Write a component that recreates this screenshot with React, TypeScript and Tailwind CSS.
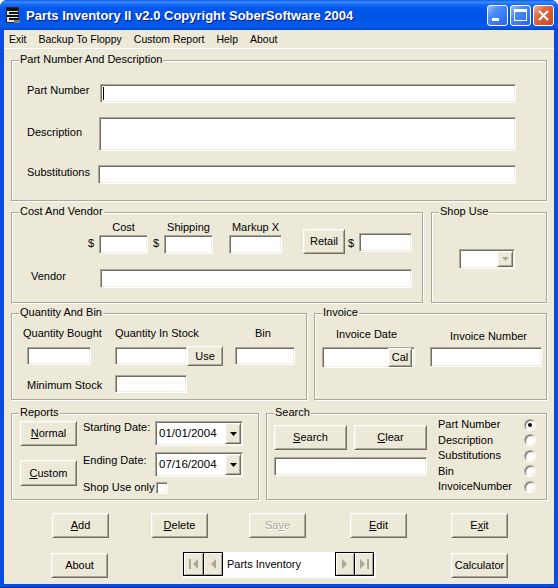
import type { ReactNode } from "react";

function GroupBox({ title, className = "", children }: { title: string; className?: string; children?: ReactNode }) {
  return (
    <div className={`relative shrink-0 border border-[#aca899] shadow-[inset_1px_1px_0_#fff,1px_1px_0_#fff] ${className}`}>
      <span className="absolute left-[7px] top-[-8px] bg-[#ece9d8] px-[1px] leading-[13px] whitespace-nowrap">{title}</span>
      {children}
    </div>
  );
}

function Sunken({ className = "", children }: { className?: string; children?: ReactNode }) {
  return (
    <div className={`shrink-0 bg-white border border-t-[#aca899] border-l-[#aca899] border-r-white border-b-white shadow-[inset_1px_1px_0_#716f64,inset_-1px_-1px_0_#f1efe2] ${className}`}>
      {children}
    </div>
  );
}

function Btn({ children, className = "", disabled = false }: { children?: ReactNode; className?: string; disabled?: boolean }) {
  return (
    <div
      className={`shrink-0 flex items-center justify-center bg-[#ece9d8] border border-t-white border-l-white border-r-[#716f64] border-b-[#716f64] shadow-[inset_1px_1px_0_#f1efe2,inset_-1px_-1px_0_#aca899] whitespace-nowrap ${
        disabled ? "text-[#aca899] [text-shadow:1px_1px_0_#fff]" : "text-black"
      } ${className}`}
    >
      {children}
    </div>
  );
}

function Radio({ checked = false }: { checked?: boolean }) {
  return (
    <div className="w-[12px] h-[12px] shrink-0 rounded-full bg-white border border-t-[#aca899] border-l-[#aca899] border-r-white border-b-white shadow-[inset_1px_1px_0_#716f64,inset_-1px_-1px_0_#f1efe2] flex items-center justify-center">
      {checked && <div className="w-[4px] h-[4px] rounded-full bg-black" />}
    </div>
  );
}

function DatePicker({ value }: { value: string }) {
  return (
    <Sunken className="w-[88px] h-[25px] flex items-center justify-between pl-[3px] pr-[1px]">
      <span className="text-[11.5px]">{value}</span>
      <Btn className="w-[16px] h-[21px]">
        <svg width="7" height="4" viewBox="0 0 7 4">
          <path d="M0 0h7L3.5 4z" fill="#000" />
        </svg>
      </Btn>
    </Sunken>
  );
}

function AppIcon() {
  return (
    <svg width="16" height="18" viewBox="0 0 16 18" className="shrink-0">
      <rect x="1.5" y="1.5" width="12" height="15" fill="#e4e4e4" stroke="#2a2a2a" />
      <rect x="2" y="2" width="11" height="3" fill="#111" />
      <rect x="4" y="6" width="9" height="2" fill="#111" />
      <rect x="2" y="9" width="11" height="2" fill="#111" />
      <rect x="4" y="12" width="9" height="2" fill="#111" />
      <rect x="9" y="14" width="6" height="3" fill="#7a7a7a" />
    </svg>
  );
}

function TitleBar() {
  return (
    <div className="h-[30px] shrink-0 flex items-center pl-[5px] pr-[4px] rounded-t-[7px] bg-[linear-gradient(180deg,#0a5af0_0%,#3d8bff_7%,#1a6ef9_14%,#0058ee_28%,#0054e3_55%,#0058ee_80%,#0a5ae8_90%,#0044c8_100%)]">
      <AppIcon />
      <span className="ml-[5px] text-[13px] font-bold text-white leading-none [text-shadow:1px_1px_0_#0a1a80]">
        Parts Inventory II v2.0 Copyright SoberSoftware 2004
      </span>
      <div className="ml-auto flex gap-[2px] self-start mt-[5px]">
        <div className="relative w-[21px] h-[21px] rounded-[3px] border border-white bg-[linear-gradient(135deg,#9cc0fb_0%,#4a8af7_35%,#2a66ea_100%)]">
          <div className="absolute left-[4px] top-[12px] w-[7px] h-[3px] bg-white" />
        </div>
        <div className="relative w-[21px] h-[21px] rounded-[3px] border border-white bg-[linear-gradient(135deg,#9cc0fb_0%,#4a8af7_35%,#2a66ea_100%)]">
          <div className="absolute left-[3px] top-[3px] w-[13px] h-[12px] border border-white border-t-[3px]" />
        </div>
        <div className="relative w-[21px] h-[21px] rounded-[3px] border border-white bg-[linear-gradient(135deg,#f3b29a_0%,#e2683f_35%,#c8461f_100%)] flex items-center justify-center">
          <svg width="11" height="11" viewBox="0 0 11 11">
            <path d="M1 1L10 10M10 1L1 10" stroke="#fff" strokeWidth="2" />
          </svg>
        </div>
      </div>
    </div>
  );
}

function NavIcon({ dir, end }: { dir: "left" | "right"; end?: boolean }) {
  return (
    <svg width="10" height="10" viewBox="0 0 10 10">
      {dir === "left" ? (
        <>
          {end && <rect x="0" y="0" width="2" height="10" fill="#aca899" />}
          <path d={end ? "M9 0v10L4 5z" : "M8 0v10L3 5z"} fill="#aca899" />
        </>
      ) : (
        <>
          <path d={end ? "M1 0v10l5-5z" : "M2 0v10l5-5z"} fill="#aca899" />
          {end && <rect x="8" y="0" width="2" height="10" fill="#aca899" />}
        </>
      )}
    </svg>
  );
}

function NavBtn({ children, className = "" }: { children: ReactNode; className?: string }) {
  return (
    <div className={`h-full flex items-center justify-center bg-[#ece9d8] shadow-[inset_1px_1px_0_#fff,inset_-1px_-1px_0_#aca899] ${className}`}>
      {children}
    </div>
  );
}

function DataControl() {
  return (
    <div className="ml-[75px] w-[193px] h-[26px] bg-white flex items-start">
      <div className="flex h-[24px] border border-black">
        <NavBtn className="w-[19px]">
          <NavIcon dir="left" end />
        </NavBtn>
        <div className="w-px bg-black" />
        <NavBtn className="w-[18px]">
          <NavIcon dir="left" />
        </NavBtn>
      </div>
      <span className="ml-[4px] mt-[6px] whitespace-nowrap">Parts Inventory</span>
      <div className="ml-auto mr-[2px] flex h-[24px] border border-black">
        <NavBtn className="w-[18px]">
          <NavIcon dir="right" />
        </NavBtn>
        <div className="w-px bg-black" />
        <NavBtn className="w-[18px]">
          <NavIcon dir="right" end />
        </NavBtn>
      </div>
    </div>
  );
}

const searchFields = ["Part Number", "Description", "Substitutions", "Bin", "InvoiceNumber"];

export default function App() {
  return (
    <div className="w-[558px] h-[588px] flex flex-col bg-[#0b4de2] rounded-t-[7px] shadow-[inset_0_-1px_0_#0a2a9c] font-['Liberation_Sans',Arial,sans-serif] text-[11px] leading-[13px] text-black select-none">
      <TitleBar />
      <div className="flex-1 mx-[4px] mb-[4px] bg-[#ece9d8] flex flex-col">
        {/* menu */}
        <div className="h-[19px] shrink-0 flex items-center gap-[12px] pl-[5px] border-b border-white text-[10.5px]">
          <span>Exit</span>
          <span>Backup To Floppy</span>
          <span>Custom Report</span>
          <span>Help</span>
          <span>About</span>
        </div>

        <div className="flex flex-col pl-[7px]">
          {/* part number and description */}
          <GroupBox title="Part Number And Description" className="mt-[11px] w-[536px] h-[141px]">
            <div className="flex items-start mt-[23px] ml-[15px]">
              <span className="w-[73px]">Part Number</span>
              <Sunken className="w-[416px] h-[19px] pl-[2px] pt-[2px]">
                <div className="w-px h-[13px] bg-black" />
              </Sunken>
            </div>
            <div className="flex items-start mt-[14px] ml-[15px]">
              <span className="w-[72px] mt-[9px]">Description</span>
              <Sunken className="w-[417px] h-[34px]" />
            </div>
            <div className="flex items-start mt-[14px] ml-[15px]">
              <span className="w-[71px] mt-[1px]">Substitutions</span>
              <Sunken className="w-[418px] h-[19px]" />
            </div>
          </GroupBox>

          {/* cost / shop use */}
          <div className="flex mt-[11px]">
            <GroupBox title="Cost And Vendor" className="w-[412px] h-[91px]">
              <div className="flex items-start mt-[8px] ml-[76px]">
                <span className="w-[11px] mt-[16px]">$</span>
                <div className="w-[49px] flex flex-col items-center">
                  <span>Cost</span>
                  <Sunken className="w-[49px] h-[19px] mt-[1px]" />
                </div>
                <span className="w-[11px] ml-[5px] mt-[16px]">$</span>
                <div className="w-[49px] flex flex-col items-center">
                  <span>Shipping</span>
                  <Sunken className="w-[49px] h-[19px] mt-[1px]" />
                </div>
                <div className="w-[53px] ml-[16px] flex flex-col items-center">
                  <span className="whitespace-nowrap">Markup X</span>
                  <Sunken className="w-[53px] h-[19px] mt-[1px]" />
                </div>
                <Btn className="w-[42px] h-[25px] ml-[21px] mt-[8px]">Retail</Btn>
                <span className="w-[11px] ml-[3px] mt-[16px]">$</span>
                <Sunken className="w-[53px] h-[19px] mt-[12px]" />
              </div>
              <div className="flex items-start mt-[15px] ml-[19px]">
                <span className="w-[69px] mt-[1px]">Vendor</span>
                <Sunken className="w-[312px] h-[19px]" />
              </div>
            </GroupBox>
            <GroupBox title="Shop Use" className="ml-[8px] w-[116px] h-[91px]">
              <Sunken className="ml-[27px] mt-[36px] w-[56px] h-[20px] p-[1px] flex justify-end">
                <Btn className="w-[16px] h-[16px]">
                  <svg width="7" height="4" viewBox="0 0 7 4">
                    <path d="M0 0h7L3.5 4z" fill="#aca899" />
                  </svg>
                </Btn>
              </Sunken>
            </GroupBox>
          </div>

          {/* quantity / invoice */}
          <div className="flex mt-[10px]">
            <GroupBox title="Quantity And Bin" className="w-[296px] h-[87px]">
              <div className="flex mt-[13px] ml-[11px] whitespace-nowrap">
                <span className="w-[92px]">Quantity Bought</span>
                <span className="w-[140px]">Quantity In Stock</span>
                <span>Bin</span>
              </div>
              <div className="flex items-start mt-[6px] ml-[15px]">
                <Sunken className="w-[64px] h-[18px] mt-[1px]" />
                <Sunken className="w-[72px] h-[18px] mt-[1px] ml-[24px]" />
                <Btn className="w-[36px] h-[20px]">Use</Btn>
                <Sunken className="w-[60px] h-[18px] mt-[1px] ml-[12px]" />
              </div>
              <div className="flex items-start mt-[9px] ml-[15px]">
                <span className="w-[88px] mt-[4px] whitespace-nowrap">Minimum Stock</span>
                <Sunken className="w-[72px] h-[18px]" />
              </div>
            </GroupBox>
            <GroupBox title="Invoice" className="ml-[7px] w-[233px] h-[87px]">
              <div className="flex items-start mt-[14px] ml-[21px] whitespace-nowrap">
                <span className="w-[114px]">Invoice Date</span>
                <span className="mt-[2px]">Invoice Number</span>
              </div>
              <div className="flex items-start mt-[4px] ml-[7px]">
                <Sunken className="w-[93px] h-[21px] flex justify-end pr-[2px]">
                  <Btn className="w-[24px] h-[19px]">Cal</Btn>
                </Sunken>
                <Sunken className="w-[112px] h-[20px] ml-[15px]" />
              </div>
            </GroupBox>
          </div>

          {/* reports / search */}
          <div className="flex mt-[13px]">
            <GroupBox title="Reports" className="w-[248px] h-[87px]">
              <div className="flex">
                <div className="flex flex-col ml-[8px]">
                  <Btn className="w-[57px] h-[25px] mt-[7px]">
                    <span>
                      <u>N</u>ormal
                    </span>
                  </Btn>
                  <Btn className="w-[57px] h-[26px] mt-[14px]">
                    <span>
                      <u>C</u>ustom
                    </span>
                  </Btn>
                </div>
                <div className="flex flex-col ml-[6px] mt-[7px]">
                  <div className="flex items-start">
                    <span className="w-[72px] whitespace-nowrap">Starting Date:</span>
                    <DatePicker value="01/01/2004" />
                  </div>
                  <div className="flex items-start mt-[6px]">
                    <span className="w-[72px] mt-[2px] whitespace-nowrap">Ending Date:</span>
                    <DatePicker value="07/16/2004" />
                  </div>
                  <div className="flex items-start mt-[4px]">
                    <span className="w-[73px] whitespace-nowrap">Shop Use only</span>
                    <Sunken className="w-[12px] h-[12px] mt-[1px]" />
                  </div>
                </div>
              </div>
            </GroupBox>
            <GroupBox title="Search" className="ml-[7px] w-[281px] h-[87px]">
              <div className="flex">
                <div className="flex flex-col ml-[7px] mt-[11px]">
                  <div className="flex gap-[7px]">
                    <Btn className="w-[73px] h-[25px]">
                      <span>
                        <u>S</u>earch
                      </span>
                    </Btn>
                    <Btn className="w-[73px] h-[25px]">
                      <span>
                        <u>C</u>lear
                      </span>
                    </Btn>
                  </div>
                  <Sunken className="w-[153px] h-[19px] mt-[7px]" />
                </div>
                <div className="flex flex-col ml-[11px] mt-[3px]">
                  {searchFields.map((f, i) => (
                    <div key={f} className="flex items-center h-[15.5px]">
                      <span className="w-[86px] whitespace-nowrap">{f}</span>
                      <Radio checked={i === 0} />
                    </div>
                  ))}
                </div>
              </div>
            </GroupBox>
          </div>

          {/* action buttons */}
          <div className="flex mt-[13px]">
            <Btn className="ml-[41px] w-[57px] h-[25px]">
              <span>
                <u>A</u>dd
              </span>
            </Btn>
            <Btn className="ml-[42px] w-[57px] h-[25px]">
              <span>
                <u>D</u>elete
              </span>
            </Btn>
            <Btn disabled className="ml-[41px] w-[57px] h-[25px]">
              <span>
                Sa<u>v</u>e
              </span>
            </Btn>
            <Btn className="ml-[44px] w-[57px] h-[25px]">
              <span>
                <u>E</u>dit
              </span>
            </Btn>
            <Btn className="ml-[44px] w-[57px] h-[25px]">
              <span>
                E<u>x</u>it
              </span>
            </Btn>
          </div>

          <div className="flex items-start mt-[14px]">
            <Btn className="ml-[40px] mt-[1px] w-[57px] h-[25px]">About</Btn>
            <DataControl />
            <Btn className="ml-[75px] mt-[1px] w-[57px] h-[25px]">Calculator</Btn>
          </div>
        </div>
      </div>
    </div>
  );
}
